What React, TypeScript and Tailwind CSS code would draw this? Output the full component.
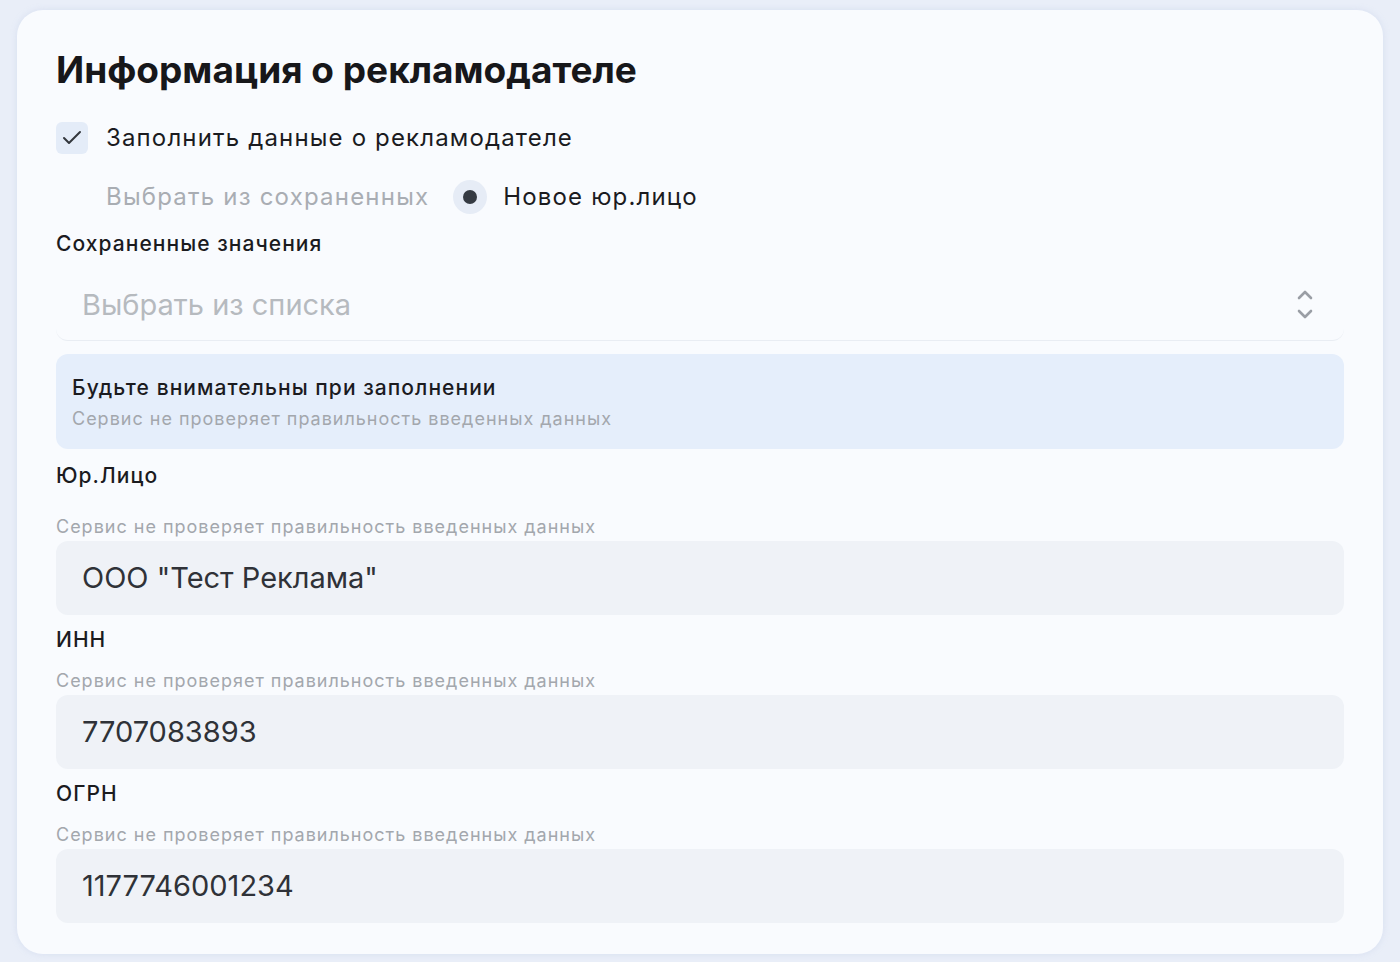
import { Check } from "lucide-react";

const HINT = "Сервис не проверяет правильность введенных данных";

function Field({ label, value, first }: { label: string; value: string; first?: boolean }) {
  return (
    <div className="flex flex-col">
      <div className="text-[21px] leading-[28px] font-medium tracking-[0.05em] text-[#1b1b1f]">{label}</div>
      <div
        className={
          (first ? "mt-[26px] " : "mt-[16px] ") +
          "text-[18px] leading-[22px] tracking-[0.055em] text-[#a3a7ad]"
        }
      >
        {HINT}
      </div>
      <div className="mt-[3px] flex h-[74px] items-center rounded-[12px] bg-[#eff2f7] px-[26px] text-[29px] text-[#2f3238]">
        {value}
      </div>
    </div>
  );
}

export default function App() {
  return (
    <div className="min-h-screen bg-[#e9eef8] px-[17px] pt-[10px] pb-[9px] font-['Inter',sans-serif]">
      <div className="rounded-[26px] bg-[#f9fbfe] px-[39px] pt-[40px] pb-[31px] shadow-[0_0_6px_rgba(180,195,225,0.35)]">
        <h1 className="text-[37px] leading-[40px] font-bold tracking-[0] text-[#17171a]">
          Информация о рекламодателе
        </h1>

        <label className="mt-[32px] flex items-center gap-[18px]">
          <span className="flex h-[32px] w-[32px] items-center justify-center rounded-[6px] bg-[#e4ecf8]">
            <Check className="h-[24px] w-[24px] text-[#33373d]" strokeWidth={2} />
          </span>
          <span className="text-[24px] leading-[30px] tracking-[0.048em] text-[#1b1b1f]">
            Заполнить данные о рекламодателе
          </span>
        </label>

        <div className="mt-[26px] flex items-center pl-[50px]">
          <span className="text-[24px] leading-[30px] tracking-[0.05em] text-[#a9adb3]">Выбрать из сохраненных</span>
          <span className="ml-[24px] flex h-[34px] w-[34px] items-center justify-center rounded-full bg-[#e6ecf6]">
            <span className="h-[14px] w-[14px] rounded-full bg-[#353a42]" />
          </span>
          <span className="ml-[16px] text-[24px] leading-[30px] tracking-[0.048em] text-[#1b1b1f]">Новое юр.лицо</span>
        </div>

        <div className="mt-[16px] text-[21px] leading-[28px] font-medium tracking-[0.05em] text-[#1b1b1f]">
          Сохраненные значения
        </div>

        <div className="mt-[12px] flex h-[71px] items-center justify-between rounded-[12px] border-b border-[#e9edf3] bg-[#f9fbfe] px-[26px]">
          <span className="text-[29px] text-[#b6babf]">Выбрать из списка</span>
          <svg width="18" height="32" viewBox="0 0 18 32" fill="none" stroke="#9a9ea5" strokeWidth="2.6" strokeLinecap="round" strokeLinejoin="round" className="mr-[4px]">
            <path d="M3 9l6-6 6 6" />
            <path d="M3 22l6 6 6-6" />
          </svg>
        </div>

        <div className="mt-[13px] rounded-[12px] bg-[#e5eefb] px-[16px] pt-[20px] pb-[19px]">
          <div className="text-[21px] leading-[28px] font-medium tracking-[0.05em] text-[#1b1b1f]">
            Будьте внимательны при заполнении
          </div>
          <div className="mt-[6px] text-[18px] leading-[22px] tracking-[0.055em] text-[#a3a7ad]">{HINT}</div>
        </div>

        <div className="mt-[13px] flex flex-col gap-[11px]">
          <Field label="Юр.Лицо" value={'ООО "Тест Реклама"'} first />
          <Field label="ИНН" value="7707083893" />
          <Field label="ОГРН" value="1177746001234" />
        </div>
      </div>
    </div>
  );
}
